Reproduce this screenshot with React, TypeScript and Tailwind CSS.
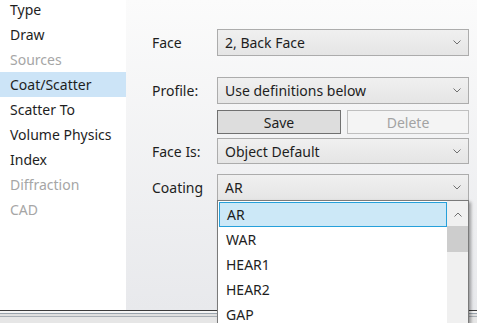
const font = { fontFamily: '"Noto Sans", "Open Sans", Arial, sans-serif' };

const navItems = [
  { label: "Type" },
  { label: "Draw" },
  { label: "Sources", disabled: true },
  { label: "Coat/Scatter", selected: true },
  { label: "Scatter To" },
  { label: "Volume Physics" },
  { label: "Index" },
  { label: "Diffraction", disabled: true },
  { label: "CAD", disabled: true },
];

const coatings = ["AR", "WAR", "HEAR1", "HEAR2", "GAP"];

function Chevron({ up = false }: { up?: boolean }) {
  return (
    <svg width="8" height="5" viewBox="0 0 8 5" className="shrink-0">
      <polyline
        points={up ? "0.5,4.5 4,1 7.5,4.5" : "0.5,0.5 4,4 7.5,0.5"}
        fill="none"
        stroke="#707070"
        strokeWidth="1"
      />
    </svg>
  );
}

function Combo({ value, h = "h-[27px]" }: { value: string; h?: string }) {
  return (
    <div
      className={`w-[252px] ${h} flex items-center justify-between pl-[7px] pr-[7px] border border-[#acacac] bg-gradient-to-b from-[#f0f0f0] to-[#e5e5e5] text-[14px] text-[#1e1e1e]`}
    >
      <span>{value}</span>
      <Chevron />
    </div>
  );
}

function Row({ label, children, className = "" }: { label: string; children: React.ReactNode; className?: string }) {
  return (
    <div className={`flex items-center ${className}`}>
      <div className="w-[91px] pl-[26px] text-[14px] text-[#1e1e1e]">{label}</div>
      {children}
    </div>
  );
}

export default function App() {
  return (
    <div className="relative w-[477px] h-[323px] overflow-hidden bg-white" style={font}>
      <div className="flex h-[310px]">
        <div className="w-[126px] bg-white overflow-hidden">
          <div className="mt-[-3px]">
            {navItems.map((it) => (
              <div
                key={it.label}
                className={`h-[25px] flex items-center pl-[10px] text-[14px] ${
                  it.selected ? "bg-[#cce4f7]" : ""
                } ${it.disabled ? "text-[#a6a6a6]" : "text-[#1e1e1e]"}`}
              >
                {it.label}
              </div>
            ))}
          </div>
        </div>

        <div className="flex-1 bg-gradient-to-b from-[#fbfbfb] to-[#e8e9ec] pt-[29px]">
          <Row label="Face">
            <Combo value="2, Back Face" />
          </Row>
          <Row label="Profile:" className="mt-[21px]">
            <Combo value="Use definitions below" />
          </Row>
          <div className="flex mt-[6px] pl-[91px] gap-[6px]">
            <button className="w-[124px] h-[24px] border border-[#707070] bg-[#dddddd] text-[14px] text-[#1e1e1e]">
              Save
            </button>
            <button className="w-[122px] h-[24px] border border-[#bfbfbf] bg-[#f4f4f4] text-[14px] text-[#a3a3a3]">
              Delete
            </button>
          </div>
          <Row label="Face Is:" className="mt-[4px]">
            <Combo value="Object Default" h="h-[26px]" />
          </Row>
          <Row label="Coating" className="mt-[10px]">
            <Combo value="AR" />
          </Row>
        </div>
      </div>

      <div className="h-[13px] bg-[#e6e6e6]">
        <div className="h-px bg-[#3c3c3c]" />
        <div className="h-[2px] bg-[#f4f4f4]" />
        <div className="h-px bg-[#9aa4ad]" />
        <div className="h-[2px] bg-[#e0e0e0]" />
        <div className="h-px bg-[#a8aeb4]" />
      </div>

      {/* open coating dropdown */}
      <div className="absolute left-[217px] top-[200px] w-[252px] h-[140px] border border-[#7a7a7a] bg-white flex shadow-[2px_2px_3px_rgba(0,0,0,0.35)]">
        <div className="flex-1 pt-px pl-px">
          {coatings.map((c, i) => (
            <div
              key={c}
              className={`h-[25px] flex items-center pl-[7px] text-[14px] text-[#1e1e1e] ${
                i === 0 ? "bg-[#cce8f7] border border-[#26a0da] pl-[6px]" : ""
              }`}
            >
              {c}
            </div>
          ))}
        </div>
        <div className="w-[21px] bg-[#f0f0f0] flex flex-col pt-px">
          <div className="h-[24px] flex items-center justify-center">
            <Chevron up />
          </div>
          <div className="h-[26px] bg-[#cdcdcd]" />
        </div>
      </div>
    </div>
  );
}
